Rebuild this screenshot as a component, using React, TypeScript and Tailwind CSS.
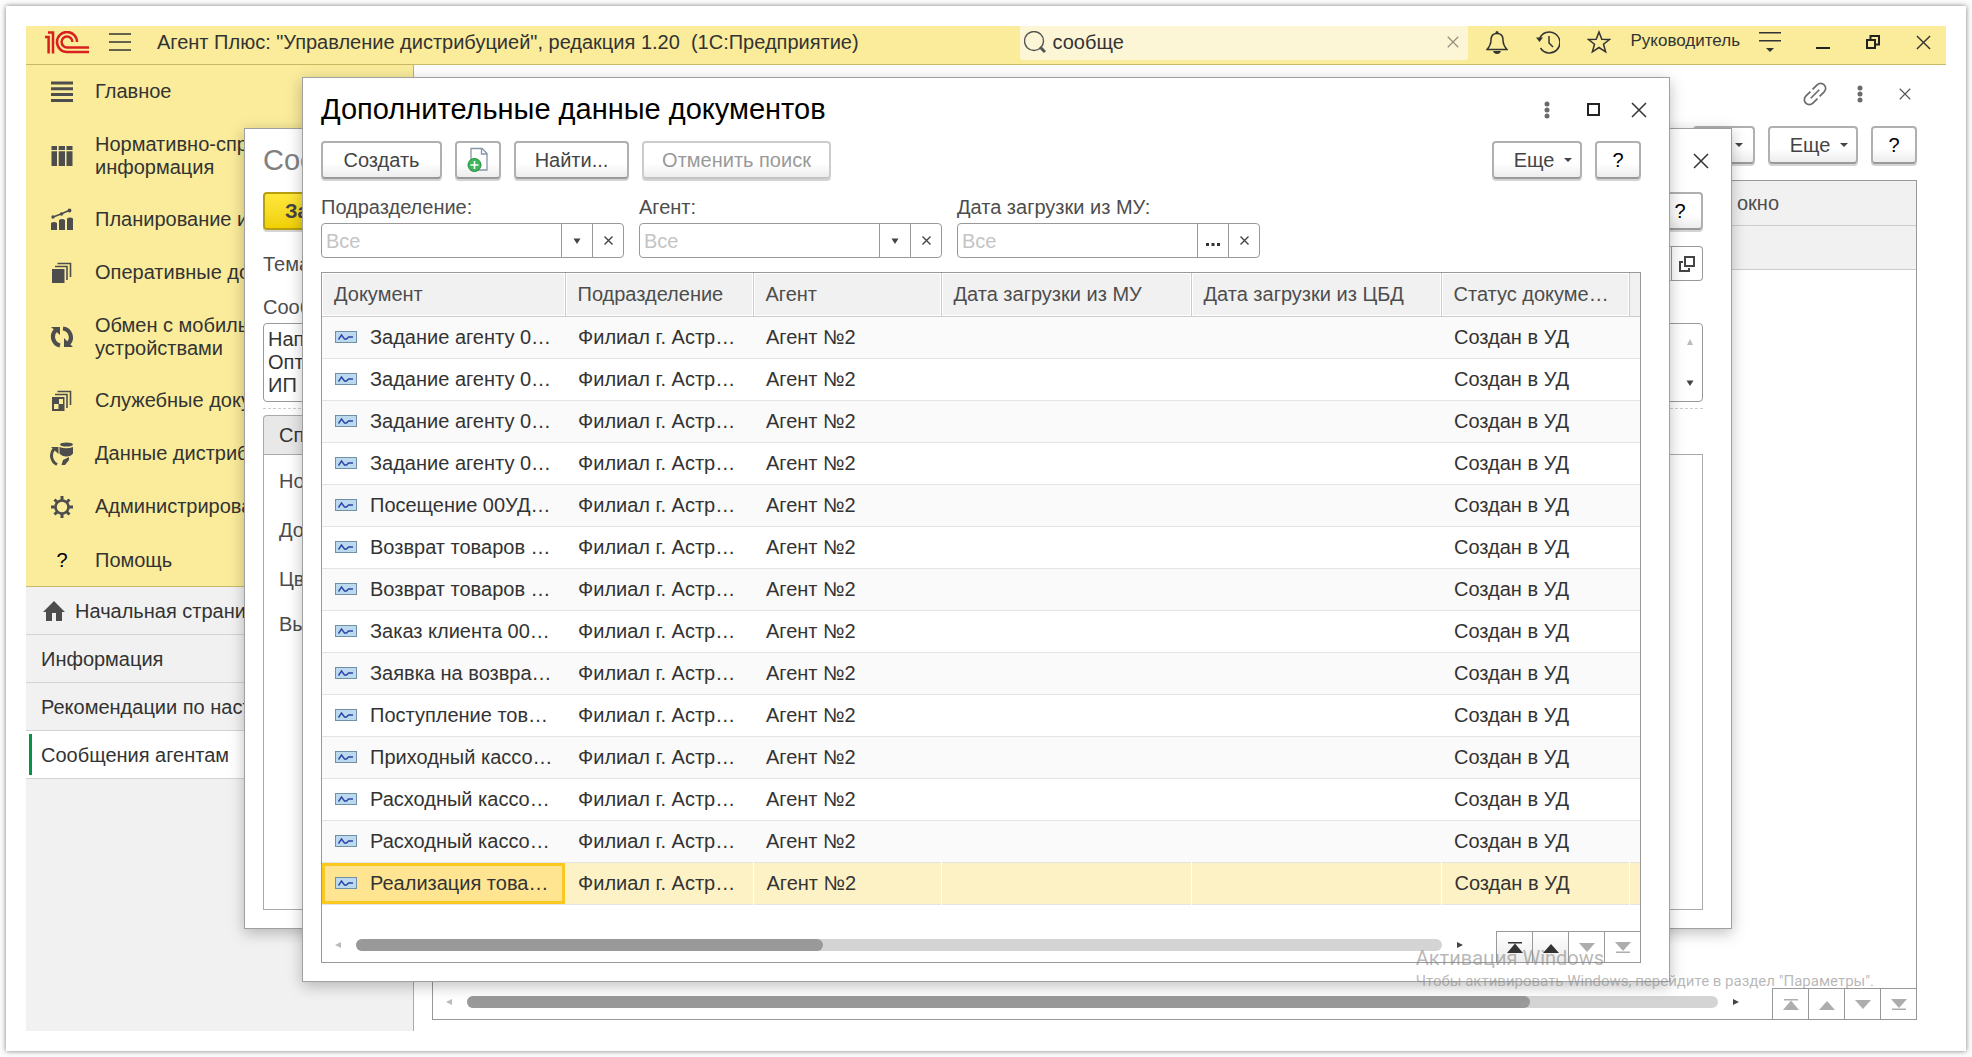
import { ReactNode } from "react";
import clsx from "clsx";

const documents = [
  "Задание агенту 0…",
  "Задание агенту 0…",
  "Задание агенту 0…",
  "Задание агенту 0…",
  "Посещение 00УД…",
  "Возврат товаров …",
  "Возврат товаров …",
  "Заказ клиента 00…",
  "Заявка на возвра…",
  "Поступление тов…",
  "Приходный кассо…",
  "Расходный кассо…",
  "Расходный кассо…",
  "Реализация това…",
];

const columns = [
  "Документ",
  "Подразделение",
  "Агент",
  "Дата загрузки из МУ",
  "Дата загрузки из ЦБД",
  "Статус докуме…",
];

const tabs = ["Информация", "Рекомендации по настройке", "Сообщения агентам"];

/* ---------- icons ---------- */

function Logo() {
  return (
    <svg width="44" height="23" viewBox="0 0 44 23" fill="none" stroke="#d9201f" strokeWidth="2.5">
      <path d="M0 6H3.600V22.500M3 1.500H8V22.500" />
      <path d="M32 11A10 10 0 1 0 22 21H44" />
      <path d="M27.400 11A5.400 5.400 0 1 0 22 16.400H44" />
    </svg>
  );
}

function Cross({ size, color = "#333" }: { size: number; color?: string }) {
  return (
    <svg width={size} height={size} viewBox="0 0 16 16" stroke={color} strokeWidth="1.5">
      <path d="M1 1L15 15M15 1L1 15" />
    </svg>
  );
}

function Dots() {
  return (
    <svg width="6" height="18" viewBox="0 0 6 18" fill="#6b6b6b">
      <circle cx="3" cy="3" r="2.5" />
      <circle cx="3" cy="9" r="2.5" />
      <circle cx="3" cy="15" r="2.5" />
    </svg>
  );
}

const triangles = {
  up: "M1 7L4 1L7 7Z",
  down: "M0.500 1.500H7.500L4 7Z",
  left: "M7 1L1 4L7 7Z",
  right: "M1 1L7 4L1 7Z",
};

function Triangle({ dir, color = "#444" }: { dir: keyof typeof triangles; color?: string }) {
  return (
    <svg width="8" height="8" viewBox="0 0 8 8" fill={color} className="shrink-0">
      <path d={triangles[dir]} />
    </svg>
  );
}

function DocIcon() {
  return (
    <svg width="22" height="12" viewBox="0 0 22 12" fill="none" className="shrink-0">
      <rect x="0.5" y="0.5" width="21" height="11" fill="#bcd9ee" stroke="#7190a8" />
      <path d="M3.500 8.500L6.500 4L9.500 8L11.500 8L13.500 6H18" stroke="#2846a8" strokeWidth="1.400" />
    </svg>
  );
}

function MenuIcon({ children }: { children: ReactNode }) {
  return (
    <svg width="24" height="24" viewBox="0 0 24 24" fill="#4d4d4d" className="shrink-0">
      {children}
    </svg>
  );
}

const sections = [
  {
    label: "Главное",
    icon: <path d="M1 1.500H23V4.500H1ZM1 7.300H23V10.300H1ZM1 13.100H23V16.100H1ZM1 19H23V22H1Z" />,
  },
  {
    label: "Нормативно-справочная информация",
    tall: true,
    icon: <path d="M2 2H7V6H1.500V2ZM8.700 2H15V6H8.700ZM16.500 2H22.500V6H16.500ZM1.500 7.200H7V22H1.500ZM8.700 7.200H15V22H8.700ZM16.500 7.200H22.500V22H16.500Z" />,
  },
  {
    label: "Планирование и анализ",
    icon: (
      <>
        <path d="M1 15Q4 13 7 15V22H1ZM9 12Q12 10 15 12V22H9ZM17 10.500Q20 8.500 23 10.500V22H17Z" />
        <path d="M3 9L11 6L19 2.500" stroke="#4d4d4d" strokeWidth="1.500" fill="none" />
        <circle cx="3" cy="9" r="1.700" />
        <circle cx="11.500" cy="6" r="1.700" />
        <circle cx="19.500" cy="2.500" r="1.900" />
      </>
    ),
  },
  {
    label: "Оперативные документы",
    icon: (
      <>
        <path d="M2 8H14.500V22H2Z" />
        <path d="M5 5.500H17V19M7.500 2.500H20.500V16" stroke="#4d4d4d" strokeWidth="1.600" fill="none" />
      </>
    ),
  },
  {
    label: "Обмен с мобильными устройствами",
    tall: true,
    icon: (
      <>
        <path d="M10 20.500A9 9 0 0 1 6 5M13 3.500A9 9 0 0 1 18 19" stroke="#4d4d4d" strokeWidth="4.200" fill="none" />
        <path d="M1 2H10V10ZM23 22H14V13Z" />
      </>
    ),
  },
  {
    label: "Служебные документы",
    icon: (
      <>
        <path d="M2 8H14.500V22H2Z" />
        <path d="M9 10H13V15H9ZM4 15H8.500V20H4Z" fill="#faec9b" />
        <path d="M5 5.500H17V19M7.500 2.500H20.500V16" stroke="#4d4d4d" strokeWidth="1.600" fill="none" />
      </>
    ),
  },
  {
    label: "Данные дистрибуции",
    icon: (
      <>
        <ellipse cx="16.500" cy="2.500" rx="6.500" ry="2" />
        <path d="M9.500 5Q16.500 7.500 23 5V11.500Q21 14.500 16.500 14.500T9.500 11.500Z" />
        <path d="M7 22.500A10 10 0 0 1 4 7" stroke="#4d4d4d" strokeWidth="3" fill="none" />
        <path d="M1 5H8.500V12ZM19 15V18L15 23H11.500L13 18Z" />
      </>
    ),
  },
  {
    label: "Администрирование",
    icon: (
      <>
        <circle cx="12" cy="12" r="6.500" fill="none" stroke="#4d4d4d" strokeWidth="2.600" />
        <path
          d="M12 1V5M12 19V23M1 12H5M19 12H23M4.500 4.500L7 7M17 17L19.500 19.500M4.500 19.500L7 17M17 7L19.500 4.500"
          stroke="#4d4d4d"
          strokeWidth="3"
        />
      </>
    ),
  },
];

/* ---------- controls ---------- */

const buttonBase =
  "flex h-[38px] items-center justify-center rounded border-2 border-[#b0b0b0] border-b-[#999] bg-linear-to-b from-white from-60% to-[#ededed] shadow-[0_2px_0_#d4d4d4]";

function Button({ children, className, label, disabled }: { children: ReactNode; className?: string; label?: string; disabled?: boolean }) {
  return (
    <button type="button" aria-label={label} disabled={disabled} className={clsx(buttonBase, disabled ? "border-[#ccc] border-b-[#c4c4c4] text-[#999]" : "text-[#444]", className)}>
      {children}
    </button>
  );
}

function MoreButton() {
  return (
    <Button className="w-[90px] gap-[10px] pl-[12px]">
      Еще
      <svg width="8" height="4" viewBox="0 0 8 4" fill="#444">
        <path d="M0 0H8L4 4Z" />
      </svg>
    </Button>
  );
}

function HelpButton() {
  return <Button className="w-[46px] text-black">?</Button>;
}

function Filter({ id, label, picker }: { id: string; label: string; picker: "list" | "date" }) {
  return (
    <div className="flex w-[303px] flex-col gap-[4px]">
      <label htmlFor={id} className="leading-[24px] text-[#4d4d4d]">
        {label}
      </label>
      <div className="flex h-[35px] rounded border border-[#999] bg-white">
        <input id={id} placeholder="Все" className="min-w-0 flex-1 px-[4px] outline-none placeholder:text-[#c4c4c4]" />
        <button type="button" aria-label="Выбрать" className="flex w-[31px] items-center justify-center border-l border-[#999]">
          {picker === "list" ? (
            <Triangle dir="down" />
          ) : (
            <svg width="14" height="3" viewBox="0 0 14 3" fill="#333" className="mt-2">
              <path d="M0 0H3V3H0ZM5.500 0H8.500V3H5.500ZM11 0H14V3H11Z" />
            </svg>
          )}
        </button>
        <button type="button" aria-label="Очистить" className="flex w-[31px] items-center justify-center border-l border-[#999]">
          <svg width="9" height="9" viewBox="0 0 9 9" stroke="#444" strokeWidth="1.400">
            <path d="M0.500 0.500L8.500 8.500M8.500 0.500L0.500 8.500" />
          </svg>
        </button>
      </div>
    </div>
  );
}

function PagerButtons({ upActive }: { upActive?: boolean }) {
  const up = upActive ? "#333" : "#adadad";
  const cell = "flex h-[31px] w-[36px] items-center justify-center border-t border-l border-[#999]";
  const active = upActive && "bg-linear-to-b from-white to-[#ececec]";
  return (
    <div className="flex">
      <button type="button" aria-label="В начало" className={clsx(cell, active)}>
        <svg width="16" height="11" viewBox="0 0 16 11" fill={up}>
          <path d="M1 0H15V1.500H1ZM8 1.500L16 11H0Z" />
        </svg>
      </button>
      <button type="button" aria-label="Вверх" className={clsx(cell, active)}>
        <svg width="16" height="11" viewBox="0 0 16 11" fill={up}>
          <path d="M8 2L16 11H0Z" />
        </svg>
      </button>
      <button type="button" aria-label="Вниз" className={cell}>
        <svg width="16" height="11" viewBox="0 0 16 11" fill="#adadad">
          <path d="M0 1H16L8 10Z" />
        </svg>
      </button>
      <button type="button" aria-label="В конец" className={cell}>
        <svg width="16" height="11" viewBox="0 0 16 11" fill="#adadad">
          <path d="M0 0H16L8 9ZM1 9.500H15V11H1Z" />
        </svg>
      </button>
    </div>
  );
}

function ScrollFooter({ thumb, upActive }: { thumb: string; upActive?: boolean }) {
  return (
    <div className="flex items-end">
      <div className="flex h-[31px] flex-1 items-center gap-[14px] pr-[32px] pb-1 pl-[12px]">
        <Triangle dir="left" color="#bbb" />
        <div className="h-[12px] flex-1 rounded-full bg-[#d4d4d4]">
          <div className={clsx("h-full rounded-full bg-[#999]", thumb)} />
        </div>
        <Triangle dir="right" />
      </div>
      <PagerButtons upActive={upActive} />
    </div>
  );
}

/* ---------- application frame ---------- */

function TopBar() {
  return (
    <header className="flex h-[39px] shrink-0 border-b border-[#c9b967] bg-[#faec9b] pl-[19px]">
      <div className="flex h-[32px] flex-1 items-center">
        <Logo />
        <button type="button" aria-label="Меню" className="ml-[20px]">
          <svg width="22" height="18" viewBox="0 0 22 18" stroke="#333" strokeWidth="1.6">
            <path d="M0 1H22M0 9H22M0 17H22" />
          </svg>
        </button>
        <h1 className="ml-[26px] whitespace-pre">{'Агент Плюс: "Управление дистрибуцией", редакция 1.20  (1С:Предприятие)'}</h1>
      </div>
      <div className="flex h-[34px] w-[448px] items-center rounded-b-sm bg-[#fdf6d6] pr-[9px] pb-[2px] pl-1">
        <svg width="22" height="22" viewBox="0 0 22 22" fill="none" stroke="#555" strokeWidth="1.4">
          <circle cx="10" cy="10" r="9.500" />
          <path d="M16 16L21 21" strokeWidth="3" />
        </svg>
        <input aria-label="Поиск" defaultValue="сообще" className="min-w-0 flex-1 pl-[6px] outline-none" />
        <button type="button" aria-label="Очистить поиск">
          <Cross size={12} color="#8f8b78" />
        </button>
      </div>
      <div className="flex h-[32px] items-center pr-[15px] pl-[18px]">
        <button type="button" aria-label="Уведомления">
          <svg width="22" height="23" viewBox="0 0 22 23" fill="none" stroke="#333" strokeWidth="1.5">
            <path d="M1 18.500Q5 14 5 9Q5 2.500 11 2.500T17 9Q17 14 21 18.500Z" />
            <path d="M7 20H15Q14 23 11 23T7 20Z" fill="#333" stroke="none" />
            <circle cx="11" cy="1.500" r="1.500" fill="#333" stroke="none" />
          </svg>
        </button>
        <button type="button" aria-label="История" className="ml-[28px]">
          <svg width="24" height="23" viewBox="0 0 24 23" fill="none" stroke="#333" strokeWidth="1.5">
            <path d="M3.500 8A10.500 10.500 0 1 1 4.500 17" />
            <path d="M13 5V12L17 16" />
            <path d="M0 6.500H7L3.500 11Z" fill="#333" stroke="none" />
          </svg>
        </button>
        <button type="button" aria-label="Избранное" className="ml-[27px]">
          <svg width="24" height="24" viewBox="0 0 24 24" fill="none" stroke="#333" strokeWidth="1.5">
            <path d="M12 2L14.800 9.200L22.500 9.500L16.500 14.200L18.600 21.800L12 17.500L5.400 21.800L7.500 14.200L1.500 9.500L9.200 9.200Z" />
          </svg>
        </button>
        <a href="#user" className="ml-[19px] pb-[2px] text-[17px]">
          Руководитель
        </a>
        <button type="button" aria-label="Настройки" className="ml-[19px]">
          <svg width="22" height="20" viewBox="0 0 22 20" fill="#333">
            <path d="M0 0H22V1.600H0ZM0 8H22V9.600H0ZM7 16H15L11 20Z" />
          </svg>
        </button>
        <button type="button" aria-label="Свернуть" className="ml-[35px]">
          <svg width="14" height="14" viewBox="0 0 14 14" fill="#222">
            <path d="M0 12H14V14H0Z" />
          </svg>
        </button>
        <button type="button" aria-label="Восстановить" className="ml-[36px]">
          <svg width="14" height="14" viewBox="0 0 14 14" fill="none" stroke="#222" strokeWidth="2">
            <path d="M1 5H9V13H1ZM4.500 5V1H13V9.500H9" />
          </svg>
        </button>
        <button type="button" aria-label="Закрыть" className="ml-[36px]">
          <Cross size={15} />
        </button>
      </div>
    </header>
  );
}

function Sidebar() {
  return (
    <aside className="flex w-[388px] shrink-0 flex-col border-r border-[#c0b060] bg-[#f1f1f1]">
      <nav className="border-b border-[#c9b967] bg-[#faec9b]">
        {sections.map((s) => (
          <a key={s.label} href="#section" className={clsx("flex items-center gap-[21px] pr-5 pl-[24px] leading-[23px]", s.tall ? "h-[75px]" : "h-[53px]")}>
            <MenuIcon>{s.icon}</MenuIcon>
            {s.label}
          </a>
        ))}
        <a href="#help" className="flex h-[53px] items-center gap-[21px] pl-[24px]">
          <span className="w-[24px] text-center text-black">?</span>
          Помощь
        </a>
      </nav>
      <a href="#home" className="flex h-[48px] items-center gap-[10px] border-b border-[#d4d4d4] pl-[17px]">
        <svg width="22" height="20" viewBox="0 0 22 20" fill="#4d4d4d">
          <path d="M11 0L22 11H19V20H13V12H9V20H3V11H0Z" />
        </svg>
        Начальная страница
      </a>
      {tabs.map((tab, i) => (
        <a
          key={tab}
          href="#tab"
          className={clsx("flex h-[48px] items-center gap-[9px] border-b border-[#d4d4d4] pl-[3px]", i === tabs.length - 1 && "bg-white")}
        >
          <span className={clsx("h-[41px] w-[3px]", i === tabs.length - 1 && "bg-[#009646]")} />
          {tab}
        </a>
      ))}
    </aside>
  );
}

function MessagesPage() {
  return (
    <main className="flex min-w-0 flex-1 flex-col pr-[29px] pb-[11px] pl-[18px]">
      <div className="flex h-[58px] items-center justify-end pr-[6px]">
        <button type="button" aria-label="Получить ссылку">
          <svg width="24" height="24" viewBox="0 0 24 24" fill="none" stroke="#6b6b6b" strokeWidth="1.7">
            <g transform="rotate(-45 12 12)">
              <path d="M10.500 7H4A5 5 0 0 0 4 17H10.500M13.500 7H20A5 5 0 0 1 20 17H13.500M6 12H18" />
            </g>
          </svg>
        </button>
        <button type="button" aria-label="Еще действия" className="ml-[30px]">
          <Dots />
        </button>
        <button type="button" aria-label="Закрыть страницу" className="ml-[36px]">
          <Cross size={12} color="#555" />
        </button>
      </div>
      <div className="flex justify-end gap-[13px] pt-[3px]">
        <Button className="w-[62px] justify-end pr-[10px]" label="Поиск">
          <svg width="8" height="4" viewBox="0 0 8 4" fill="#444">
            <path d="M0 0H8L4 4Z" />
          </svg>
        </Button>
        <MoreButton />
        <HelpButton />
      </div>
      <div className="mt-[16px] flex flex-1 flex-col border border-[#999]">
        <table className="w-full table-fixed text-left">
          <colgroup>
            <col />
            <col className="w-[190px]" />
          </colgroup>
          <thead>
            <tr className="h-[44px] border-b border-[#ccc] bg-[#f1f1f1] text-[#4d4d4d]">
              <th />
              <th className="pl-[11px] font-normal">окно</th>
            </tr>
          </thead>
          <tbody>
            <tr className="h-[44px] border-b border-[#ccc] bg-[#f1f1f1]">
              <td />
              <td />
            </tr>
          </tbody>
        </table>
        <div className="mt-auto">
          <ScrollFooter thumb="w-[85%]" />
        </div>
      </div>
    </main>
  );
}

/* ---------- windows ---------- */

function MessageWindow() {
  return (
    <section className="absolute top-[102px] right-[214px] bottom-[102px] left-[218px] flex flex-col border border-[#a0a0a0] bg-white pr-[28px] pb-[18px] pl-[18px] shadow-[0_4px_14px_rgba(0,0,0,0.25)]">
      <div className="-mr-[6px] flex h-[63px] items-center justify-between">
        <h2 className="text-[29px] text-[#808080]">Сообщение</h2>
        <button type="button" aria-label="Закрыть сообщение">
          <Cross size={16} />
        </button>
      </div>
      <div className="flex justify-between">
        <button
          type="button"
          className="h-[38px] rounded border-2 border-[#b89f10] bg-linear-to-b from-[#ffe83a] to-[#f0d000] px-[20px] font-bold text-[#444] shadow-[0_2px_0_#d4d4d4]"
        >
          Записать
        </button>
        <HelpButton />
      </div>
      <div className="mt-[16px] flex h-[35px] items-center">
        <label htmlFor="subject" className="w-[120px] text-[#4d4d4d]">
          Тема:
        </label>
        <input id="subject" className="h-full flex-1 rounded-l border border-[#999] outline-none" />
        <button type="button" aria-label="Открыть" className="flex h-full w-[31px] items-center justify-center rounded-r border border-l-0 border-[#999]">
          <svg width="16" height="16" viewBox="0 0 16 16" fill="none" stroke="#444" strokeWidth="2">
            <path d="M6 1H15V10H6ZM4 6H1V15H10V12" />
          </svg>
        </button>
      </div>
      <label htmlFor="body" className="mt-[14px] leading-[24px] text-[#4d4d4d]">
        Сообщение:
      </label>
      <div className="mt-[4px] flex h-[79px] shrink-0 rounded border border-[#999]">
        <textarea
          id="body"
          className="flex-1 resize-none overflow-hidden px-[4px] py-[4px] leading-[23px] outline-none"
          defaultValue={"Направление\nОптовая\nИП"}
        />
        <div className="flex flex-col justify-between py-[14px] pr-[8px]">
          <Triangle dir="up" color="#bbb" />
          <Triangle dir="down" />
        </div>
      </div>
      <div className="mt-[6px] border-t border-dashed border-[#ccc]" />
      <div className="mt-[6px] flex">
        <button type="button" className="h-[39px] rounded-tl border border-b-0 border-[#aaa] bg-[#e8e8e8] px-[15px]">
          Список
        </button>
      </div>
      <div className="flex flex-1 flex-col border border-[#aaa] pt-[14px] pl-[15px] text-[#4d4d4d]">
        <p className="h-[49px] leading-[24px]">Номер:</p>
        <p className="h-[49px] leading-[24px]">Документ:</p>
        <p className="h-[45px] leading-[24px]">Цвет:</p>
        <p className="leading-[24px]">Выделять</p>
      </div>
    </section>
  );
}

function DocumentsTable() {
  return (
    <div className="mt-[14px] flex flex-1 flex-col border border-[#999]">
      <table className="w-full table-fixed text-left">
        <colgroup>
          <col className="w-[243px]" />
          <col className="w-[188px]" />
          <col className="w-[188px]" />
          <col className="w-[250px]" />
          <col className="w-[250px]" />
          <col className="w-[188px]" />
          <col />
        </colgroup>
        <thead>
          <tr className="h-[43px] border-b border-[#ccc] bg-[#f1f1f1] text-[#4d4d4d]">
            {columns.map((c) => (
              <th key={c} className="border-r border-[#ccc] pl-[12px] font-normal whitespace-nowrap shadow-[inset_0_0_0_1px_#fff]">
                {c}
              </th>
            ))}
            <th />
          </tr>
        </thead>
        <tbody>
          {documents.map((doc, i) => {
            const selected = i === documents.length - 1;
            const cell = clsx("pl-[13px] whitespace-nowrap", selected && "border-r border-white");
            return (
              <tr key={i} className={clsx("h-[42px] border-b border-[#e4e4e4]", selected ? "bg-[#fdf2c6]" : i % 2 === 0 ? "bg-[#fafafa]" : "bg-white")}>
                <td className={clsx("pl-[13px] whitespace-nowrap", selected && "bg-[#ffe591] shadow-[inset_0_0_0_3px_#fac81e]")}>
                  <span className="flex items-center gap-[13px]">
                    <DocIcon />
                    {doc}
                  </span>
                </td>
                <td className={cell}>Филиал г. Астр…</td>
                <td className={cell}>Агент №2</td>
                <td className={cell} />
                <td className={cell} />
                <td className={cell}>Создан в УД</td>
                <td />
              </tr>
            );
          })}
        </tbody>
      </table>
      <div className="mt-auto">
        <ScrollFooter thumb="w-[43%]" upActive />
      </div>
    </div>
  );
}

function DocumentsWindow() {
  return (
    <section className="absolute inset-x-[276px] top-[51px] bottom-[49px] flex flex-col border border-[#a0a0a0] bg-white pr-[28px] pb-[18px] pl-[18px] shadow-[0_4px_14px_rgba(0,0,0,0.25)]">
      <div className="-mr-[6px] flex h-[63px] items-center">
        <h2 className="flex-1 text-[29px] text-black">Дополнительные данные документов</h2>
        <button type="button" aria-label="Действия окна">
          <Dots />
        </button>
        <button type="button" aria-label="Развернуть" className="ml-[37px] size-[13px] border-2 border-[#222]" />
        <button type="button" aria-label="Закрыть окно" className="ml-[31px]">
          <Cross size={16} />
        </button>
      </div>
      <div className="flex gap-[13px]">
        <Button className="w-[121px]">Создать</Button>
        <Button className="w-[46px]" label="Создать копированием">
          <svg width="24" height="26" viewBox="0 0 24 26" fill="none">
            <path d="M5 1.500H16L21 6.500V23H5Z" fill="#fff" stroke="#8795a5" strokeWidth="1.300" />
            <path d="M15.500 1.500V7H21" stroke="#8795a5" strokeWidth="1.300" />
            <circle cx="8.500" cy="18" r="6.500" fill="#3fb55a" stroke="#1f8f3c" />
            <path d="M8.500 14V22M4.500 18H12.500" stroke="#fff" strokeWidth="1.600" />
          </svg>
        </Button>
        <Button className="w-[115px]">Найти...</Button>
        <Button className="mr-auto w-[189px]" disabled>
          Отменить поиск
        </Button>
        <MoreButton />
        <HelpButton />
      </div>
      <div className="mt-[16px] flex gap-[15px]">
        <Filter id="department" label="Подразделение:" picker="list" />
        <Filter id="agent" label="Агент:" picker="list" />
        <Filter id="loaded" label="Дата загрузки из МУ:" picker="date" />
      </div>
      <DocumentsTable />
    </section>
  );
}

export default function App() {
  return (
    <div className="flex h-screen bg-[#fcfcfc] p-[6px] font-['Liberation_Sans',Arial,sans-serif] text-[20px] text-[#333]">
      <div className="flex flex-1 bg-white p-[20px] shadow-[0_0_5px_rgba(0,0,0,0.5)]">
        <div className="relative flex min-w-0 flex-1 flex-col">
          <TopBar />
          <div className="flex min-h-0 flex-1">
            <Sidebar />
            <MessagesPage />
          </div>
          <MessageWindow />
          <DocumentsWindow />
          {/* system watermark on top of every window */}
          <div className="pointer-events-none absolute right-[72px] bottom-[39px] font-[Roboto,sans-serif] text-[#888]/60">
            <p className="text-[20px] leading-[24px]">Активация Windows</p>
            <p className="text-[15px] leading-[22px]">Чтобы активировать Windows, перейдите в раздел "Параметры".</p>
          </div>
        </div>
      </div>
    </div>
  );
}
